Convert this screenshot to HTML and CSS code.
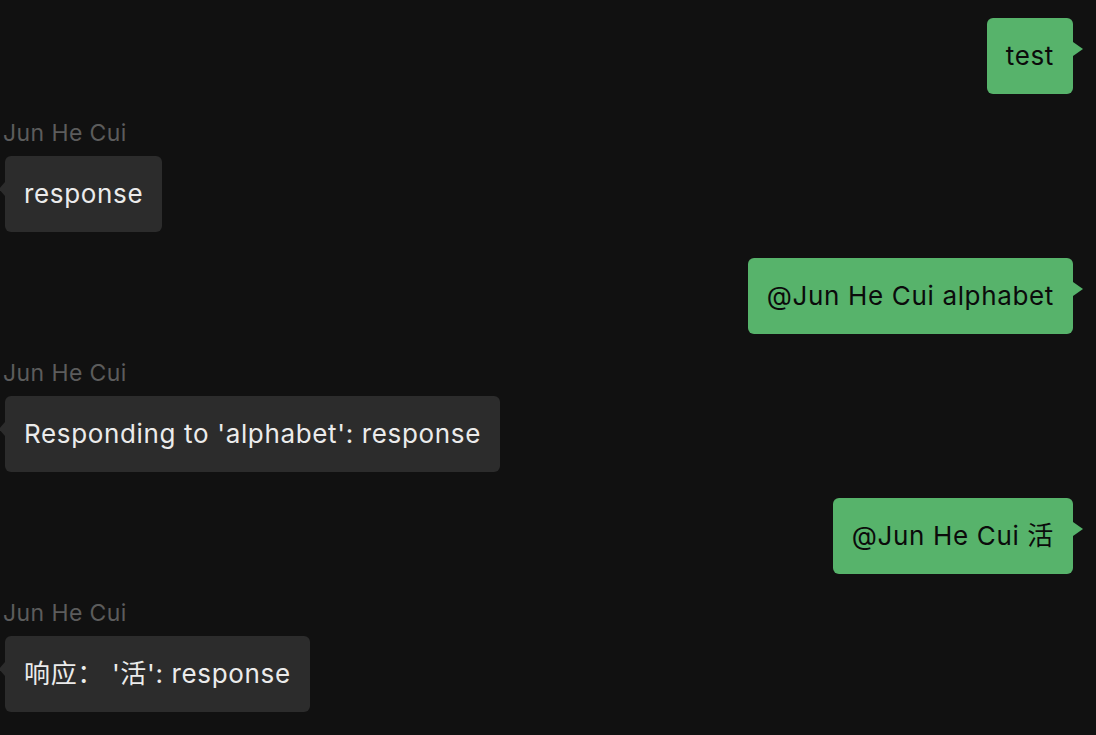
FILE: index.html
```html
<!DOCTYPE html>
<html lang="en">
<head>
<meta charset="utf-8">
<title>Chat</title>
<link rel="stylesheet" href="styles.css">
</head>
<body>
<div class="chat">
  <div class="msg out"><div class="bubble green">test</div></div>
  <div class="msg in">
    <div class="name">Jun He Cui</div>
    <div class="bubble dark">response</div>
  </div>
  <div class="msg out"><div class="bubble green">@Jun He Cui alphabet</div></div>
  <div class="msg in">
    <div class="name">Jun He Cui</div>
    <div class="bubble dark">Responding to 'alphabet': response</div>
  </div>
  <div class="msg out"><div class="bubble green">@Jun He Cui 活</div></div>
  <div class="msg in">
    <div class="name">Jun He Cui</div>
    <div class="bubble dark">响应： '活': response</div>
  </div>
</div>
</body>
</html>
```
FILE: styles.css
```css
html, body {
  margin: 0;
  padding: 0;
  background: #111111;
}
body {
  font-family: "Inter", "Noto Sans CJK SC", sans-serif;
  height: 735px;
  overflow: hidden;
}
.chat {
  display: flex;
  flex-direction: column;
  gap: 26px;
  padding: 18px 23px 0 5px;
}
.msg {
  display: flex;
  flex-direction: column;
}
.msg.out {
  align-items: flex-end;
}
.msg.in {
  align-items: flex-start;
}
.name {
  font-size: 23px;
  line-height: 26px;
  letter-spacing: 0.4px;
  color: #5c5c5c;
  margin: 0 0 10px -2px;
}
.bubble {
  position: relative;
  font-size: 26px;
  line-height: 36px;
  letter-spacing: 0.65px;
  padding: 20px 19px;
  border-radius: 6px;
}
.green {
  background: #57b36b;
  color: #0b0b0b;
}
.dark {
  background: #2c2c2c;
  color: #ebebeb;
}
.green::after {
  content: "";
  position: absolute;
  right: -10px;
  top: 24px;
  border-style: solid;
  border-width: 7px 0 7px 10px;
  border-color: transparent transparent transparent #57b36b;
}
.dark::before {
  content: "";
  position: absolute;
  left: -6px;
  top: 26px;
  border-style: solid;
  border-width: 7px 6px 7px 0;
  border-color: transparent #2c2c2c transparent transparent;
}
```
